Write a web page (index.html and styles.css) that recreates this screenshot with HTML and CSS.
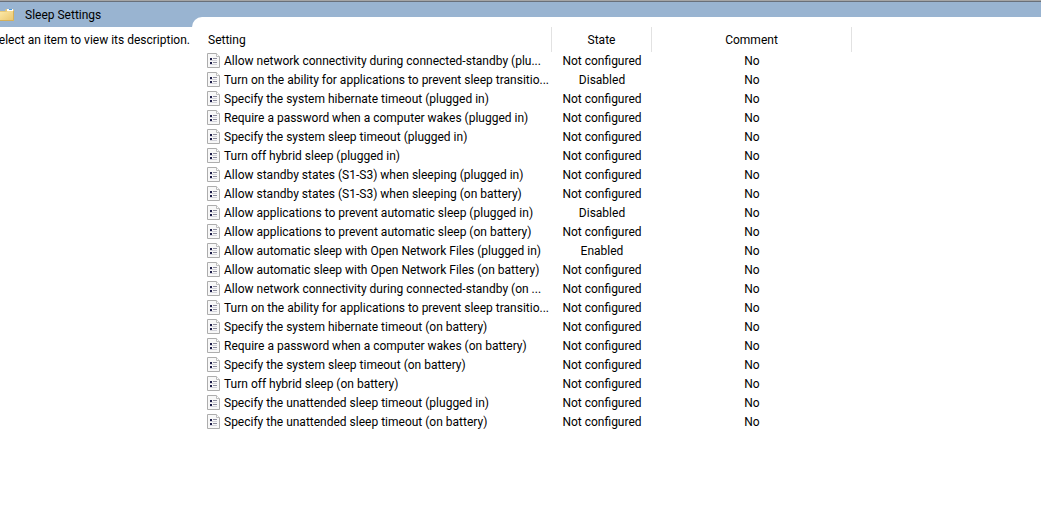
FILE: index.html
```html
<!DOCTYPE html>
<html lang="en">
<head>
<meta charset="utf-8">
<title>Sleep Settings</title>
<link rel="stylesheet" href="styles.css">
</head>
<body>
<main class="viewer">
  <aside class="side">
    <header class="banner">
      <svg class="folder" width="14" height="14" viewBox="0 0 14 14" aria-hidden="true">
        <defs><linearGradient id="fold" x1="0" y1="0" x2="1" y2="1"><stop offset="0" stop-color="#fde9a8"/><stop offset="1" stop-color="#e9c46a"/></linearGradient></defs>
        <path d="M0 3H5L6 1H13L14 2V13H0Z" fill="#e9c976"/>
        <path d="M7 1H13V3H7Z" fill="#fff"/>
        <path d="M9 1H12V2H9Z" fill="#4a9be0"/>
        <path d="M0 4H6L8 3H14V13H0Z" fill="url(#fold)"/>
        <path d="M0 12.500H13.500V3" fill="none" stroke="#d5b05a"/>
      </svg>
      <h1 class="title">Sleep Settings</h1>
    </header>
    <p class="description">Select an item to view its description.</p>
  </aside>
  <section class="content">
    <div class="sheet">
      <table class="settings">
        <colgroup><col class="col-setting"><col class="col-state"><col class="col-comment"><col></colgroup>
        <thead><tr><th>Setting</th><th>State</th><th>Comment</th><td></td></tr></thead>
        <tbody id="rows"></tbody>
      </table>
    </div>
  </section>
</main>
<script src="settings.js"></script>
</body>
</html>
```
FILE: styles.css
```css
* { box-sizing: border-box; }
body {
  margin: 0;
  background: #fff;
  color: #000;
  font: 12px/18px "Segoe UI", Roboto, sans-serif;
}
.viewer {
  display: grid;
  grid-template-columns: 192px 1fr;
  min-height: 100vh;
  border-top: 1px solid #a5a5a5;
  overflow: hidden;
}
.side, .content { border-top: 1px solid #69707a; min-width: 0; }
.banner {
  display: flex;
  align-items: center;
  gap: 11px;
  height: 25px;
  background: #99b4d1;
}
.folder { display: block; flex: none; }
.title { margin: 0; font-size: 12px; font-weight: 400; }
.description {
  display: flex;
  justify-content: flex-end;
  margin: 0;
  padding: 4px 2px 0 0;
  white-space: nowrap;
}
.content {
  padding-top: 15px;
  background: linear-gradient(#99b4d1 25px, #fff 25px);
}
.sheet {
  min-height: 100%;
  padding: 10px 0 0 10px;
  background: #fff;
  border-top-left-radius: 10px;
}
.settings {
  width: 100%;
  table-layout: fixed;
  border-collapse: separate;
  border-spacing: 0;
}
.col-setting { width: 350px; }
.col-state { width: 100px; }
.col-comment { width: 200px; }
.settings th {
  height: 25px;
  padding: 0;
  border-right: 1px solid #e2e2e2;
  font-weight: 400;
}
.settings th:first-child { padding-left: 6px; text-align: left; }
.settings tbody td {
  height: 19px;
  padding: 0;
  line-height: 19px;
  text-align: center;
  white-space: nowrap;
}
.name { display: flex; align-items: center; gap: 4px; padding-left: 5px; }
.policy { display: block; flex: none; margin-bottom: 2px; }
```
FILE: settings.js
```js
const N = "Not configured";
const settings = [
  ["Allow network connectivity during connected-standby (plu...", N],
  ["Turn on the ability for applications to prevent sleep transitio...", "Disabled"],
  ["Specify the system hibernate timeout (plugged in)", N],
  ["Require a password when a computer wakes (plugged in)", N],
  ["Specify the system sleep timeout (plugged in)", N],
  ["Turn off hybrid sleep (plugged in)", N],
  ["Allow standby states (S1-S3) when sleeping (plugged in)", N],
  ["Allow standby states (S1-S3) when sleeping (on battery)", N],
  ["Allow applications to prevent automatic sleep (plugged in)", "Disabled"],
  ["Allow applications to prevent automatic sleep (on battery)", N],
  ["Allow automatic sleep with Open Network Files (plugged in)", "Enabled"],
  ["Allow automatic sleep with Open Network Files (on battery)", N],
  ["Allow network connectivity during connected-standby (on ...", N],
  ["Turn on the ability for applications to prevent sleep transitio...", N],
  ["Specify the system hibernate timeout (on battery)", N],
  ["Require a password when a computer wakes (on battery)", N],
  ["Specify the system sleep timeout (on battery)", N],
  ["Turn off hybrid sleep (on battery)", N],
  ["Specify the unattended sleep timeout (plugged in)", N],
  ["Specify the unattended sleep timeout (on battery)", N]
];
const icon = `<svg class="policy" width="13" height="15" viewBox="0 0 13 15" aria-hidden="true">
  <path d="M.5 .5H9.500L12.500 3.500V14.500H.5Z" fill="#f8f8f8" stroke="#adadad"/>
  <path d="M9.500 .5V3.500H12.500" fill="#fff" stroke="#bdbdbd"/>
  <path d="M3 5H5V7H3ZM3 9H5V11H3Z" fill="#1c1c48"/>
  <path d="M6 5.500H10M6 9.500H10" stroke="#8a8a9a"/>
  <path d="M3 7.500H10M3 11.500H10" stroke="#d2d2da"/>
</svg>`;
document.getElementById("rows").innerHTML = settings.map(([name, state]) =>
  `<tr><td><div class="name">${icon}<span>${name}</span></div></td><td>${state}</td><td>No</td><td></td></tr>`
).join("");
```
